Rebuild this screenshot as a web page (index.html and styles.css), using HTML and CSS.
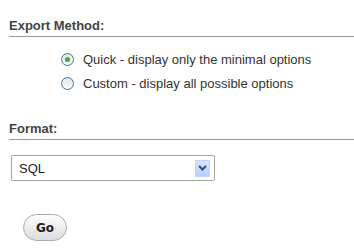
FILE: index.html
```html
<!DOCTYPE html>
<html lang="en">
<head>
  <meta charset="UTF-8" />
  <title>Export</title>
  <link rel="stylesheet" href="styles.css">
</head>
<body>

  <!-- Export method -->
  <h3 class="legend">Export Method:</h3>
  <ul class="choices">
    <li><span class="radio checked"></span>Quick - display only the minimal options</li>
    <li><span class="radio"></span>Custom - display all possible options</li>
  </ul>

  <!-- Format -->
  <h3 class="legend format">Format:</h3>
  <div class="select">
    <span>SQL</span>
    <span class="arrow">
      <svg width="9" height="6" viewBox="0 0 9 6"><path d="M1 1 L4.5 4.5 L8 1" fill="none" stroke="#2d4e8a" stroke-width="2"/></svg>
    </span>
  </div>

  <button class="go">Go</button>

</body>
</html>
```

FILE: styles.css
```css
body {
  font-family: "Liberation Sans", Arial, sans-serif;
  font-size: 13px;
  color: #333;
  margin: 0;
  padding: 18px 0 0 9px;
  background: #fff;
}
.legend {
  font-size: 13px;
  font-weight: bold;
  color: #444;
  margin: 0;
  padding-bottom: 2px;
  border-bottom: 1px solid #999;
  line-height: 16px;
}
.legend.format {
  margin-top: 26px;
}
.choices {
  list-style: none;
  margin: 10px 0 0 52px;
  padding: 0;
}
.choices li {
  display: flex;
  align-items: center;
  height: 24px;
  color: #333;
}
.radio {
  width: 11px;
  height: 11px;
  border: 1px solid #4c6d94;
  border-radius: 50%;
  background: linear-gradient(#e4e4e4, #fbfbfb);
  margin-right: 9px;
  display: flex;
  align-items: center;
  justify-content: center;
}
.radio.checked::after {
  content: "";
  width: 5px;
  height: 5px;
  border-radius: 50%;
  background: #2fb52f;
}
.select {
  width: 204px;
  height: 26px;
  margin: 15px 0 0 2px;
  border: 1px solid #a5a5a5;
  border-radius: 2px;
  display: flex;
  align-items: center;
  justify-content: space-between;
  padding: 0 4px 0 7px;
  box-sizing: border-box;
  color: #222;
}
.arrow {
  width: 15px;
  height: 17px;
  background: linear-gradient(#dbe6fd, #b9cdf7);
  border: 1px solid #c3d3fc;
  box-sizing: border-box;
  display: flex;
  align-items: center;
  justify-content: center;
}
.go {
  display: block;
  margin: 33px 0 0 14px;
  width: 44px;
  height: 27px;
  font-family: "DejaVu Sans", sans-serif;
  font-weight: bold;
  font-size: 12px;
  color: #222;
  border: 1px solid #aaa;
  border-radius: 14px;
  background: linear-gradient(#fefefe, #dcdcdc);
}
```
